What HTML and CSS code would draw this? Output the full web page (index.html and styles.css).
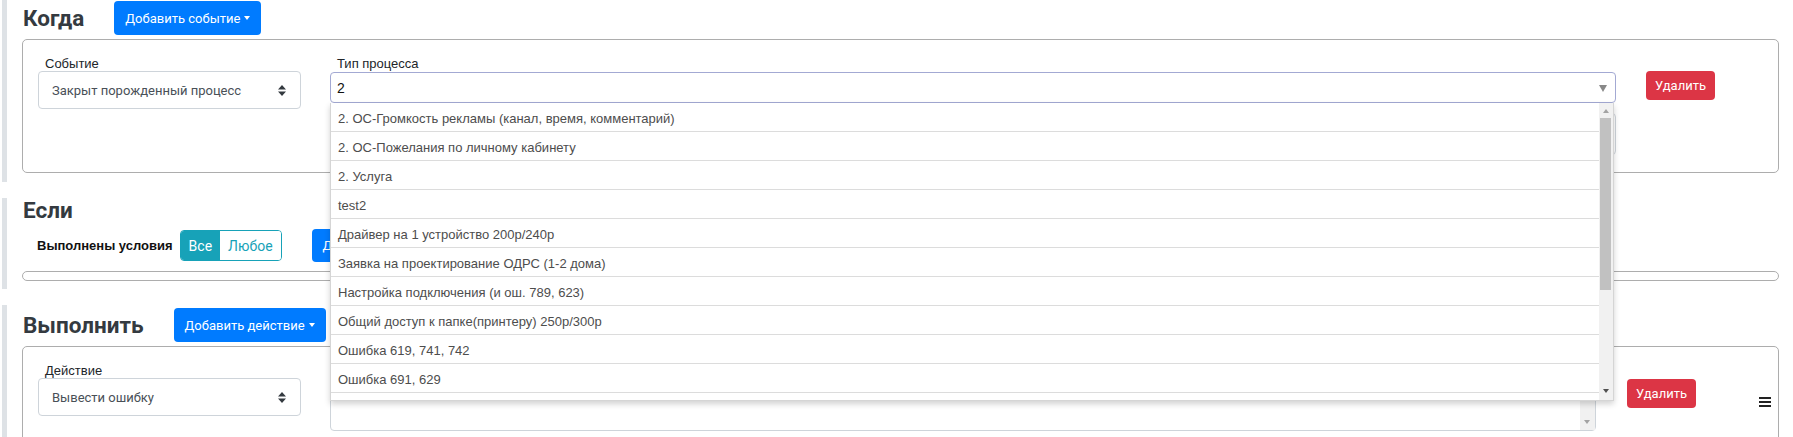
FILE: index.html
```html
<!DOCTYPE html>
<html lang="ru">

<head>
    <meta charset="UTF-8">
    <meta name="viewport" content="width=device-width, initial-scale=1.0">
    <title>Правило автоматизации</title>
    <link rel="stylesheet" href="styles.css">
</head>

<body>
    <div class="page">
        <!-- Когда -->
        <section class="block">
            <div class="block-head">
                <h3>Когда</h3>
                <button class="btn btn-primary">Добавить событие<span class="caret"></span></button>
            </div>
            <div class="card">
                <div class="rule-row">
                    <div class="field field-first">
                        <label>Событие</label>
                        <div class="custom-select">
                            <span>Закрыт порожденный процесс</span>
                            <svg width="8" height="11" viewBox="0 0 8 11"><path d="M4 0 L8 4.5 H0 Z M4 11 L0 6.5 H8 Z" fill="#343a40"/></svg>
                        </div>
                    </div>
                    <div class="field field-main">
                        <label>Тип процесса</label>
                        <div class="s2">
                            <span>2</span>
                            <span class="s2-arrow"></span>
                            <div class="s2-dropdown">
                                <ul class="s2-results">
                                    <li>2. ОС-Громкость рекламы (канал, время, комментарий)</li>
                                    <li>2. ОС-Пожелания по личному кабинету</li>
                                    <li>2. Услуга</li>
                                    <li>test2</li>
                                    <li>Драйвер на 1 устройство 200р/240р</li>
                                    <li>Заявка на проектирование ОДРС (1-2 дома)</li>
                                    <li>Настройка подключения (и ош. 789, 623)</li>
                                    <li>Общий доступ к папке(принтеру) 250р/300р</li>
                                    <li>Ошибка 619, 741, 742</li>
                                    <li>Ошибка 691, 629</li>
                                    <li></li>
                                </ul>
                                <div class="scrollbar">
                                    <span class="sb-up"></span>
                                    <span class="sb-thumb"></span>
                                    <span class="sb-down"></span>
                                </div>
                            </div>
                        </div>
                        <div class="s2-extra"></div>
                    </div>
                    <div class="field-actions">
                        <button class="btn btn-danger">Удалить</button>
                    </div>
                </div>
            </div>
        </section>

        <!-- Если -->
        <section class="block block-if">
            <div class="block-head block-head-plain">
                <h3>Если</h3>
            </div>
            <div class="cond-row">
                <span class="cond-label">Выполнены условия</span>
                <div class="btn-group">
                    <button class="toggle active">Все</button>
                    <button class="toggle">Любое</button>
                </div>
                <button class="btn btn-primary btn-cond">Добавить условие<span class="caret"></span></button>
            </div>
            <div class="card card-empty"></div>
        </section>

        <!-- Выполнить -->
        <section class="block">
            <div class="block-head">
                <h3>Выполнить</h3>
                <button class="btn btn-primary">Добавить действие<span class="caret"></span></button>
            </div>
            <div class="card">
                <div class="rule-row rule-row-action">
                    <div class="field field-first">
                        <label>Действие</label>
                        <div class="custom-select">
                            <span>Вывести ошибку</span>
                            <svg width="8" height="11" viewBox="0 0 8 11"><path d="M4 0 L8 4.5 H0 Z M4 11 L0 6.5 H8 Z" fill="#343a40"/></svg>
                        </div>
                    </div>
                    <div class="field field-main">
                        <label></label>
                        <div class="textarea">
                            <div class="ta-scroll"><span class="ta-down"></span></div>
                        </div>
                    </div>
                    <div class="field-actions field-actions-action">
                        <button class="btn btn-danger">Удалить</button>
                    </div>
                    <div class="handle">
                        <svg width="12" height="10" viewBox="0 0 12 10"><rect y="0" width="12" height="2" fill="#222"/><rect y="4" width="12" height="2" fill="#222"/><rect y="8" width="12" height="2" fill="#222"/></svg>
                    </div>
                </div>
            </div>
        </section>
    </div>
</body>

</html>
```

FILE: styles.css
```css
body {
    margin: 0;
    font-family: Roboto, "Liberation Sans", sans-serif;
    background-color: #fff;
    color: #212529;
    overflow: hidden;
}

.page {
    margin-top: -2px;
}

.block {
    margin: 0 0 16px 2px;
    border-left: 5px solid #dee2e6;
    padding: 3px 14px 9px 15px;
}

.block-if {
    padding-top: 0;
    padding-bottom: 8px;
}

.block-head {
    display: flex;
    align-items: center;
    height: 34px;
    margin-bottom: 4px;
}

.block-head-plain {
    height: 24px;
    margin-bottom: 7px;
}

.block-head h3 {
    margin: 0 30px 0 1px;
    font-size: 22.5px;
    font-weight: 700;
    color: #343a40;
    line-height: 24px;
}

.btn {
    font-family: Roboto, sans-serif;
    font-size: 13px;
    border: none;
    border-radius: 4px;
    color: #fff;
    cursor: pointer;
    display: inline-flex;
    align-items: center;
}

.btn-primary {
    background-color: #007bff;
    height: 34px;
    padding: 0 11px;
}

.btn-danger {
    background-color: #dc3545;
    height: 29px;
    padding: 0 9px;
}

.caret {
    display: inline-block;
    margin-left: 4px;
    border-left: 3.5px solid transparent;
    border-right: 3.5px solid transparent;
    border-top: 4px solid #fff;
}

.card {
    border: 1px solid #adadad;
    border-radius: 5px;
}

.card-empty {
    height: 8px;
    margin-top: 9px;
}

.rule-row {
    display: flex;
    padding: 16px 63px 17px 15px;
}

.rule-row-action {
    padding-right: 7px;
}

.field label {
    display: block;
    height: 15px;
    line-height: 15px;
    padding-left: 7px;
    font-family: "Liberation Sans", sans-serif;
    font-size: 13px;
    color: #212529;
}

.field-first {
    width: 263px;
    margin-right: 29px;
}

.field-main {
    flex: 1;
}

.custom-select {
    height: 38px;
    box-sizing: border-box;
    border: 1px solid #ced4da;
    border-radius: 4px;
    padding: 0 14px 0 13px;
    display: flex;
    align-items: center;
    justify-content: space-between;
    font-size: 13px;
    color: #495057;
}

.s2 {
    position: relative;
    margin-top: 1px;
    height: 31px;
    box-sizing: border-box;
    border: 1px solid #a3a9d3;
    border-radius: 4px;
    padding: 0 6px;
    display: flex;
    align-items: center;
    font-family: "Liberation Sans", sans-serif;
    font-size: 14px;
    color: #111;
}

.s2-arrow {
    position: absolute;
    right: 8px;
    top: 12px;
    border-left: 4px solid transparent;
    border-right: 4px solid transparent;
    border-top: 7px solid #888;
}

.s2-dropdown {
    position: absolute;
    z-index: 10;
    top: calc(100% + 1px);
    left: -1px;
    right: 1px;
    height: 298px;
    display: flex;
    background-color: #fff;
    border: 1px solid #d5d5d5;
    border-top: none;
    box-sizing: border-box;
    box-shadow: 0 3px 6px rgba(0, 0, 0, 0.18);
    overflow: hidden;
}

.s2-results {
    flex: 1;
    list-style: none;
    margin: 0;
    padding: 0;
}

.s2-results li {
    height: 28px;
    line-height: 32px;
    overflow: hidden;
    border-bottom: 1px solid #dcdcdc;
    padding: 0 7px;
    font-size: 13px;
    color: #4d4d4d;
    white-space: nowrap;
}

.scrollbar {
    width: 14px;
    background-color: #f1f1f1;
    position: relative;
}

.sb-up {
    position: absolute;
    top: 6px;
    left: 4px;
    border-left: 3px solid transparent;
    border-right: 3px solid transparent;
    border-bottom: 4px solid #a3a3a3;
}

.sb-thumb {
    position: absolute;
    top: 15px;
    left: 1px;
    width: 11px;
    height: 172px;
    background-color: #c1c1c1;
}

.sb-down {
    position: absolute;
    bottom: 7px;
    left: 4px;
    border-left: 3px solid transparent;
    border-right: 3px solid transparent;
    border-top: 4px solid #505050;
}

.s2-extra {
    margin-top: 10px;
    height: 40px;
    border: 1px solid #ced4da;
    border-radius: 4px;
}

.field-actions {
    margin-left: 30px;
    padding-top: 15px;
}

.field-actions-action {
    margin-left: 31px;
    padding-top: 16px;
}

.handle {
    margin-left: 63px;
    padding-top: 29px;
    width: 12px;
}

.textarea {
    margin-top: 1px;
    height: 52px;
    box-sizing: border-box;
    border: 1px solid #ced4da;
    border-radius: 4px;
    display: flex;
    justify-content: flex-end;
}

.ta-scroll {
    width: 15px;
    background-color: #f1f1f1;
    position: relative;
}

.ta-down {
    position: absolute;
    bottom: 6px;
    left: 4px;
    border-left: 3px solid transparent;
    border-right: 3px solid transparent;
    border-top: 4px solid #a3a3a3;
}

.cond-row {
    display: flex;
    align-items: center;
    padding-left: 15px;
    height: 33px;
}

.cond-label {
    font-family: "Liberation Sans", sans-serif;
    font-size: 13px;
    font-weight: 700;
    color: #111;
    margin-right: 7px;
}

.btn-group {
    display: flex;
    height: 31px;
    border: 1px solid #17a2b8;
    border-radius: 4px;
    box-sizing: border-box;
    overflow: hidden;
}

.toggle {
    font-family: Roboto, sans-serif;
    font-size: 14px;
    border: none;
    padding: 0 8px;
    background-color: #fff;
    color: #17a2b8;
}

.toggle.active {
    background-color: #17a2b8;
    color: #fff;
}

.btn-cond {
    margin-left: 30px;
    height: 33px;
}
```
